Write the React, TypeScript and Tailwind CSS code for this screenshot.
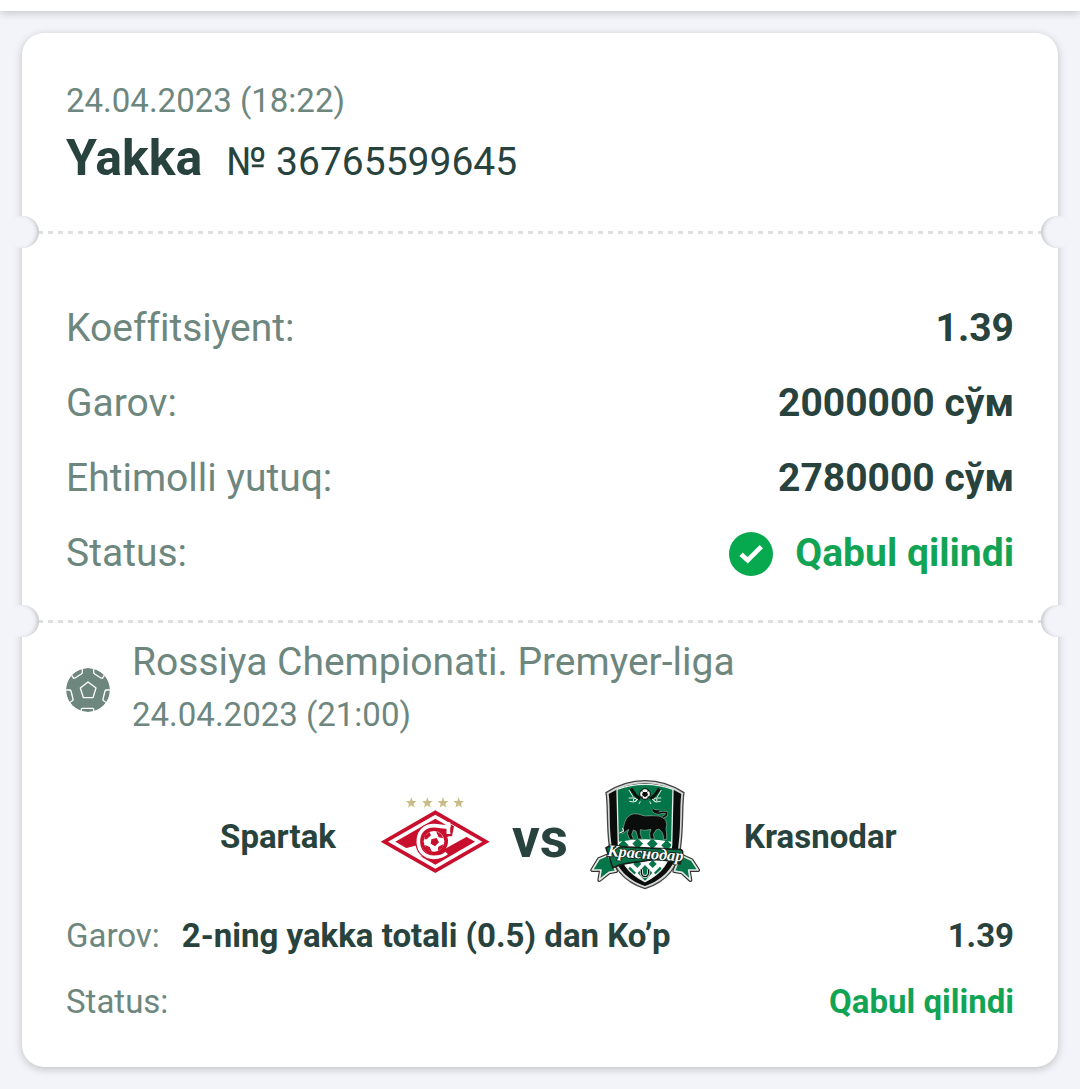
import type { ReactNode } from "react";

const details = [
  { label: "Koeffitsiyent:", value: "1.39" },
  { label: "Garov:", value: "2000000 сўм" },
  { label: "Ehtimolli yutuq:", value: "2780000 сўм" },
];

function CheckIcon() {
  return (
    <svg viewBox="30 27 132 132" className="size-11 shrink-0" aria-hidden="true">
      <circle cx="96" cy="93" r="66" fill="#07a94f" />
      <path d="M66 94 86 112 127 71" fill="none" stroke="#fff" strokeWidth="14" />
    </svg>
  );
}

function BallIcon() {
  return (
    <svg viewBox="48 197 132 132" className="size-11 shrink-0" aria-hidden="true">
      <defs>
        <clipPath id="ball">
          <circle cx="114" cy="263" r="66" />
        </clipPath>
      </defs>
      <g clipPath="url(#ball)" fill="none" stroke="#fff" strokeWidth="4" strokeLinejoin="round">
        <circle cx="114" cy="263" r="66" fill="#6d877f" stroke="none" />
        <path d="M114 239 138 257 129 286H100L91 257Z" />
        <path d="M94 334V321Q94 318 97 318H128Q131 318 131 321V334" />
        <path d="M60 210 69 225Q71 229 75 227L94 215Q97 213 97 209V196" />
        <path d="M168 210 159 225Q157 229 153 227L134 215Q131 213 131 209V196" />
        <path d="M44 263 59 263Q62 263 63 266L69 290Q70 293 67 295L56 303" />
        <path d="M184 263 169 263Q166 263 165 266L159 290Q158 293 161 295L172 303" />
      </g>
    </svg>
  );
}

function SpartakLogo() {
  return (
    <svg viewBox="30 -15 330 330" className="size-[110px] shrink-0" role="img" aria-label="Spartak">
      {[124, 172, 219, 266].map((x) => (
        <path
          key={x}
          transform={`translate(${x} 53)`}
          d="M0-17 4-5H16L7 3 10 15 0 8-10 15-7 3-16-5H-4Z"
          fill="#c9bd86"
        />
      ))}
      <path d="M32 170 196 76 359 170 196 264Z" fill="#c8102e" />
      <path d="M54 170 196 89 337 170 196 251Z" fill="#fff" />
      <path d="M76 170 196 101 315 170 196 239Z" fill="#c8102e" />
      <path d="M107 190 148 214 181 216 293 154 250 129 236 154 226 158Z" fill="#fff" />
      <path
        d="M192 122C161 122 145 143 145 170C145 198 164 217 192 217"
        fill="none"
        stroke="#c8102e"
        strokeWidth="18"
      />
      <circle cx="193" cy="169" r="41" fill="#c8102e" />
      <path d="M225 146H242V118L252 124 246 154H225Z" fill="#c8102e" />
      <path
        d="M235 112V147M236 126C220 126 207 122 192 122C161 122 145 143 145 170C145 198 164 217 192 217C207 217 220 213 230 204"
        fill="none"
        stroke="#fff"
        strokeWidth="11"
      />
      <circle cx="192" cy="169" r="31" fill="#fff" />
      <g fill="#c8102e">
        <path d="M184 163 200 159 207 172 195 184 182 176Z" />
        <path d="M165 152 178 141 183 151 170 163H163Z" />
        <path d="M198 139 213 147 220 160 206 157Z" />
        <path d="M221 177 216 190 203 198 205 185Z" />
        <path d="M186 200 168 192 165 180 179 186Z" />
      </g>
    </svg>
  );
}

function KrasnodarLogo() {
  return (
    <svg viewBox="30 27 330 333" className="h-[111px] w-[110px] shrink-0" role="img" aria-label="Krasnodar">
      <defs>
        <clipPath id="shield">
          <path d="M111 58Q153 43 195 43T279 58L275 225C270 285 236 315 195 335C154 315 120 285 115 225Z" />
        </clipPath>
      </defs>
      <path
        d="M78 68Q133 32 195 32T312 68C306 100 310 163 303 220C299 292 256 336 195 356C134 336 91 292 87 220C80 163 84 100 78 68Z"
        fill="#d5d8d7"
        stroke="#444"
        strokeWidth="4"
      />
      <path
        d="M86 72Q137 40 195 40T304 72C299 103 303 165 296 220C292 286 251 330 195 348C139 330 98 286 94 220C87 165 91 103 86 72Z"
        fill="#0b0c0c"
      />
      <g clipPath="url(#shield)">
        <rect x="100" y="38" width="190" height="310" fill="#047548" />
        <path d="M110 216Q195 200 280 216V350H110Z" fill="#fff" />
        <g fill="#047548">
          <path d="M130 210 146 226 130 242 114 226Z" />
          <path d="M173 205 189 221 173 237 157 221Z" />
          <path d="M217 205 233 221 217 237 201 221Z" />
          <path d="M260 210 276 226 260 242 244 226Z" />
          <path d="M150 290 168 308 150 326 132 308Z" />
          <path d="M195 285 217 309 195 333 173 309Z" />
          <path d="M240 290 258 308 240 326 222 308Z" />
          <path d="M172 270 184 282 172 294 160 282Z" />
          <path d="M218 270 230 282 218 294 206 282Z" />
        </g>
      </g>
      <path
        d="M111 58Q153 43 195 43T279 58L275 225C270 285 236 315 195 335C154 315 120 285 115 225Z"
        fill="none"
        stroke="#e8eeea"
        strokeWidth="4"
      />
      {/* crossed emblem above the bull */}
      <path d="M153 56 167 76 180 87M238 56 224 76 211 87" fill="none" stroke="#0b0c0c" strokeWidth="9" />
      <g fill="none" stroke="#dce8e2" strokeWidth="3">
        <path d="M147 60 160 82M244 60 231 82M146 84H166M226 84H244M148 94 162 96 174 87M242 94 228 96 216 87M181 94 177 102M209 94 213 102" />
        <circle cx="165" cy="90" r="5" />
        <circle cx="226" cy="90" r="5" />
      </g>
      <circle cx="195" cy="72" r="16" fill="#fff" stroke="#0b0c0c" strokeWidth="3" />
      <path
        d="M189 66H201L204 75 195 82 186 75ZM181 62 187 59 188 66ZM209 62 203 59 202 66ZM181 80 188 86 188 79ZM209 80 202 86 203 79Z"
        fill="#0b0c0c"
      />
      {/* bull */}
      <path
        d="M124 188 130 173 134 157Q138 142 151 135Q161 129 174 132Q194 141 218 137Q240 135 252 145Q260 151 260 164L258 178Q261 190 260 208H249L251 200 246 187 237 177 228 180 220 193 223 207H211L209 190 213 178Q192 184 181 179L181 193 187 207H174L168 184 160 180 155 194 161 208H149L142 190 146 178 134 187 126 191Z"
        fill="#0b0c0c"
        stroke="#88b5a3"
        strokeWidth="2"
      />
      <path d="M248 142Q262 137 260 128Q248 125 239 129Q225 131 218 119Q228 126 238 122" fill="none" stroke="#88b5a3" strokeWidth="8" />
      <path d="M248 142Q262 137 260 128Q248 125 239 129Q225 131 218 119Q228 126 238 122" fill="none" stroke="#0b0c0c" strokeWidth="5" />
      <path d="M118 189 131 184 128 174" fill="none" stroke="#fff" strokeWidth="3" />
      {/* ribbon */}
      <g stroke="#333" strokeWidth="12" strokeLinejoin="round">
        <path d="M84 256 57 267 37 300 63 300 58 330 87 307 108 303Z" />
        <path d="M302 256 335 271 354 300 326 300 331 330 306 307 283 303Z" />
      </g>
      <g fill="#047548" stroke="#e3e9e6" strokeWidth="5" strokeLinejoin="round">
        <path d="M84 256 57 267 37 300 63 300 58 330 87 307 108 303Z" />
        <path d="M302 256 335 271 354 300 326 300 331 330 306 307 283 303Z" />
      </g>
      <path d="M78 234Q91 223 111 230L290 238Q309 236 308 248L300 281Q241 262 185 274Q131 278 98 293L88 262Z" fill="#047548" stroke="#16201c" strokeWidth="5" />
      <text
        x="82"
        y="266"
        transform="rotate(4 193 256)"
        fontFamily="'Liberation Serif', serif"
        fontSize="49"
        fontStyle="italic"
        fontWeight="700"
        fill="#fff"
        stroke="#12241c"
        strokeWidth="5"
        paintOrder="stroke"
      >
        Краснодар
      </text>
      <path d="M184 298V309Q186 320 195 320T206 309V298" fill="none" stroke="#dfe9e4" strokeWidth="9" />
      <path d="M184 298V309Q186 320 195 320T206 309V298" fill="none" stroke="#0b0c0c" strokeWidth="4" />
    </svg>
  );
}

// Dashed tear line with a round cut-out on both edges of the ticket
function TearLine() {
  return (
    <div className="relative flex h-8 items-center px-4">
      <span className="absolute top-0 -left-2 h-8 w-[25px] rounded-r-full bg-[#f3f4f9] shadow-[inset_-4px_0_5px_-3px_#b4b6ba]" />
      <div className="h-[3px] w-full bg-[repeating-linear-gradient(to_right,#dddfe0_0px,#dddfe0_5px,transparent_5px,transparent_10px)]" />
      <span className="absolute top-0 -right-2 h-8 w-[25px] rounded-l-full bg-[#f3f4f9] shadow-[inset_4px_0_5px_-3px_#b4b6ba]" />
    </div>
  );
}

function DetailRow({ label, children }: { label: string; children: ReactNode }) {
  return (
    <div className="flex h-[75px] items-center justify-between text-[39px]">
      <dt className="text-[#6d877f]">{label}</dt>
      <dd className="flex items-center gap-[22px] font-bold">{children}</dd>
    </div>
  );
}

export default function App() {
  return (
    <div className="min-h-screen overflow-hidden bg-[#f3f4f9] pb-6 font-['Roboto','Liberation_Sans',sans-serif] text-[#28433d] [font-variant-ligatures:none]">
      <header className="h-[11px] bg-white shadow-[0_2px_8px_rgba(0,0,0,0.2)]" />

      <main className="mx-[22px] mt-[22px] rounded-[22px] bg-white pb-8 shadow-[0_2px_8px_rgba(0,0,0,0.22)]">
        <section className="px-11 pt-11 pb-[21px]">
          <p className="text-[33px] leading-[48px] text-[#6d877f]">24.04.2023 (18:22)</p>
          <div className="flex items-baseline gap-6 leading-[66px]">
            <h1 className="text-[50px] font-bold">Yakka</h1>
            <span className="text-[39px]">№ 36765599645</span>
          </div>
        </section>

        <TearLine />

        <dl className="px-11 pt-[43px] pb-[14px]">
          {details.map((row) => (
            <DetailRow key={row.label} label={row.label}>
              {row.value}
            </DetailRow>
          ))}
          <DetailRow label="Status:">
            <CheckIcon />
            <span className="text-[#12a454]">Qabul qilindi</span>
          </DetailRow>
        </dl>

        <TearLine />

        <section className="px-11">
          <div className="flex items-center gap-[22px] text-[#6d877f]">
            <BallIcon />
            <div>
              <h2 className="text-[39px] leading-[50px]">Rossiya Chempionati. Premyer-liga</h2>
              <p className="text-[33px] leading-[56px]">24.04.2023 (21:00)</p>
            </div>
          </div>

          <div className="mt-9 flex items-center gap-[22px] text-[33px] font-bold">
            <span className="flex-1 pt-1 pr-[22px] text-right">Spartak</span>
            <SpartakLogo />
            <span className="pt-2 text-[55px] leading-none">vs</span>
            <KrasnodarLogo />
            <span className="flex-1 pt-1 pl-[22px]">Krasnodar</span>
          </div>

          <dl className="mt-[13px] text-[33px]">
            <div className="flex h-[66px] items-center">
              <dt className="mr-[22px] text-[#6d877f]">Garov:</dt>
              <dd className="flex-1 font-bold">2-ning yakka totali (0.5) dan Ko’p</dd>
              <dd className="font-bold">1.39</dd>
            </div>
            <div className="flex h-[66px] items-center justify-between">
              <dt className="text-[#6d877f]">Status:</dt>
              <dd className="font-bold text-[#12a454]">Qabul qilindi</dd>
            </div>
          </dl>
        </section>
      </main>
    </div>
  );
}
